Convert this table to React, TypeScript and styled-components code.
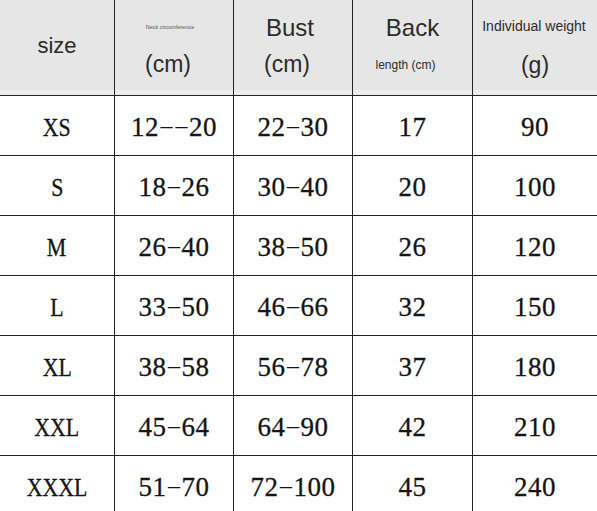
import React from "react";
import styled, { createGlobalStyle } from "styled-components";

const Global = createGlobalStyle`
  html, body { margin: 0; padding: 0; overflow: hidden; background: #ffffff; }
  #root { width: 597px; }
`;

const Table = styled.div`
  display: grid;
  grid-template-columns: 114px 119px 119px 120px 125px;
  width: 597px;
  background: #ffffff;
`;

const HeadCell = styled.div<{ $first?: boolean }>`
  height: 95px;
  box-sizing: border-box;
  background: #e6e6e6;
  box-shadow: inset 0 -5px 0 #ececec;
  border-left: ${(p) => (p.$first ? "none" : "1px solid #222")};
  display: flex;
  flex-direction: column;
  align-items: center;
  font-family: "Liberation Sans", Arial, sans-serif;
  color: #2b2b2b;
`;

const HeadLine = styled.div<{ $fs: number; $mt: number; $shift?: number; $color?: string }>`
  font-size: ${(p) => p.$fs}px;
  line-height: 1;
  margin-top: ${(p) => p.$mt}px;
  margin-right: ${(p) => (p.$shift ?? 0) * 2}px;
  color: ${(p) => p.$color ?? "#2b2b2b"};
  white-space: nowrap;
`;

const Cell = styled.div<{ $first?: boolean }>`
  height: 60px;
  box-sizing: border-box;
  border-top: 1px solid #222;
  border-left: ${(p) => (p.$first ? "none" : "1px solid #222")};
  padding-top: 4px;
  display: flex;
  align-items: center;
  justify-content: center;
  font-family: "Liberation Serif", "Times New Roman", serif;
  color: #151515;
  -webkit-text-stroke: 0.3px #151515;
`;

const Digits = styled.span`
  font-size: 27px;
  letter-spacing: 0.5px;
  white-space: nowrap;
`;

const Dash = styled.span`
  display: inline-block;
  font-size: 24px;
  margin: 0 1.5px;
  vertical-align: 3px;
  -webkit-text-stroke: 0;
  letter-spacing: 0;
`;

const Letters = styled.span`
  display: inline-block;
  font-size: 26px;
  transform: scaleX(0.84);
  white-space: nowrap;
`;

const rows: [string, string, string, string, string][] = [
  ["XS", "12––20", "22–30", "17", "90"],
  ["S", "18–26", "30–40", "20", "100"],
  ["M", "26–40", "38–50", "26", "120"],
  ["L", "33–50", "46–66", "32", "150"],
  ["XL", "38–58", "56–78", "37", "180"],
  ["XXL", "45–64", "64–90", "42", "210"],
  ["XXXL", "51–70", "72–100", "45", "240"],
];

function Range({ value }: { value: string }) {
  const parts = value.split(/(–)/);
  return (
    <Digits>
      {parts.map((p, i) => (p === "–" ? <Dash key={i}>–</Dash> : p))}
    </Digits>
  );
}

export default function App() {
  return (
    <>
      <Global />
      <Table>
        <HeadCell $first>
          <HeadLine $fs={22} $mt={35}>size</HeadLine>
        </HeadCell>
        <HeadCell>
          <HeadLine $fs={5.5} $mt={25} $shift={4} $color="#555">
            Neck circumference
          </HeadLine>
          <HeadLine $fs={23} $mt={22} $shift={6}>(cm)</HeadLine>
        </HeadCell>
        <HeadCell>
          <HeadLine $fs={24} $mt={16} $shift={3}>Bust</HeadLine>
          <HeadLine $fs={23} $mt={13} $shift={6}>(cm)</HeadLine>
        </HeadCell>
        <HeadCell>
          <HeadLine $fs={24} $mt={16}>Back</HeadLine>
          <HeadLine $fs={12} $mt={19} $shift={7}>length (cm)</HeadLine>
        </HeadCell>
        <HeadCell>
          <HeadLine $fs={14} $mt={19} $shift={1}>Individual weight</HeadLine>
          <HeadLine $fs={23} $mt={21}>(g)</HeadLine>
        </HeadCell>
        {rows.map((r) =>
          r.map((v, i) => (
            <Cell key={r[0] + i} $first={i === 0}>
              {i === 0 ? <Letters>{v}</Letters> : <Range value={v} />}
            </Cell>
          ))
        )}
      </Table>
    </>
  );
}
